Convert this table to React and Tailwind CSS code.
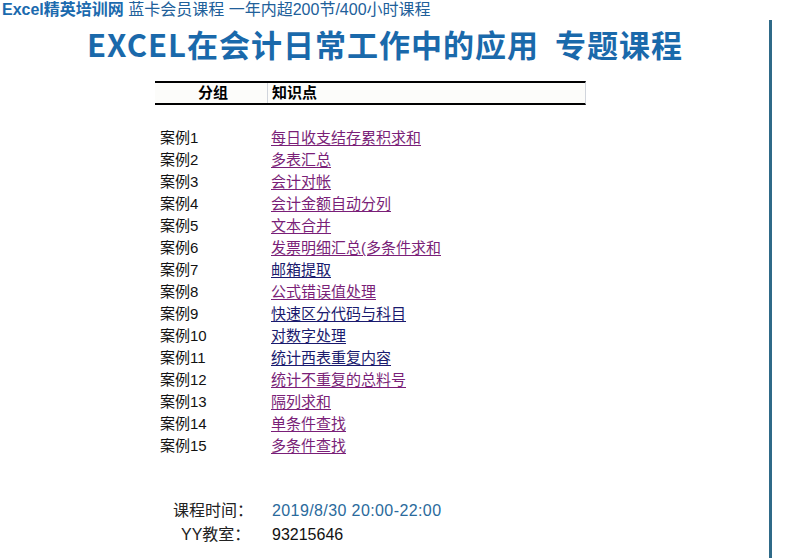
const cases = [
  ["案例1", "每日收支结存累积求和", false],
  ["案例2", "多表汇总", false],
  ["案例3", "会计对帐", false],
  ["案例4", "会计金额自动分列", false],
  ["案例5", "文本合并", false],
  ["案例6", "发票明细汇总(多条件求和", false],
  ["案例7", "邮箱提取", true],
  ["案例8", "公式错误值处理", false],
  ["案例9", "快速区分代码与科目", true],
  ["案例10", "对数字处理", true],
  ["案例11", "统计西表重复内容", true],
  ["案例12", "统计不重复的总料号", false],
  ["案例13", "隔列求和", false],
  ["案例14", "单条件查找", false],
  ["案例15", "多条件查找", false],
];

const App = () => {
  return (
    <div className="flex w-[791px] h-[558px] overflow-hidden bg-white font-['Liberation_Sans','Noto_Sans_CJK_SC',sans-serif]">
      <div className="w-[769px] shrink-0 flex flex-col">
        {/* top banner */}
        <div className="pl-[2px] h-[20px] text-[16px] leading-[20px] whitespace-nowrap">
          <span className="font-bold text-[#1b6aae]">Excel精英培训网</span>
          <span className="text-[#21609a]"> 蓝卡会员课程 一年内超200节/400小时课程</span>
        </div>

        {/* title */}
        <h1 className="mt-[6px] pl-[87px] h-[36px] text-[31px] leading-[36px] font-bold tracking-[1px] text-[#1a69ab] whitespace-pre font-['Noto_Sans_CJK_SC',sans-serif]">
          EXCEL在会计日常工作中的应用  专题课程
        </h1>

        {/* table header */}
        <div className="mt-[19px] ml-[155px] w-[431px] h-[24px] flex border-t-2 border-b-2 border-black border-r border-r-gray-300 bg-[#fcfcfa] text-[15px] font-bold leading-[20px]">
          <div className="w-[113px] border-r border-gray-300 text-center pl-[4px]">分组</div>
          <div className="pl-[4px]">知识点</div>
        </div>

        {/* rows */}
        <div className="mt-[22px] ml-[160px] flex flex-col text-[15px] leading-[22px]">
          {cases.map(([name, topic, navy]) => (
            <div key={name} className="flex h-[22px]">
              <div className="w-[111px] text-[#111]">{name}</div>
              <a
                href="#"
                className={
                  navy
                    ? "underline underline-offset-2 text-[#1a1a6e]"
                    : "underline underline-offset-2 text-[#7a1f78]"
                }
              >
                {topic}
              </a>
            </div>
          ))}
        </div>

        {/* schedule */}
        <div className="mt-[42px] flex flex-col text-[16px] leading-[24px]">
          <div className="flex">
            <div className="w-[272px] pl-[173px] text-[#222]">课程时间：</div>
            <div className="text-[#2a6a9c] tracking-[0.4px]">2019/8/30 20:00-22:00</div>
          </div>
          <div className="flex">
            <div className="w-[272px] pl-[181px] text-[#222]">YY教室：</div>
            <div className="text-[#111]">93215646</div>
          </div>
        </div>
      </div>

      {/* right rule */}
      <div className="mt-[20px] w-[3px] h-[538px] bg-[#2f6a88]" />
    </div>
  );
};

export default App;
